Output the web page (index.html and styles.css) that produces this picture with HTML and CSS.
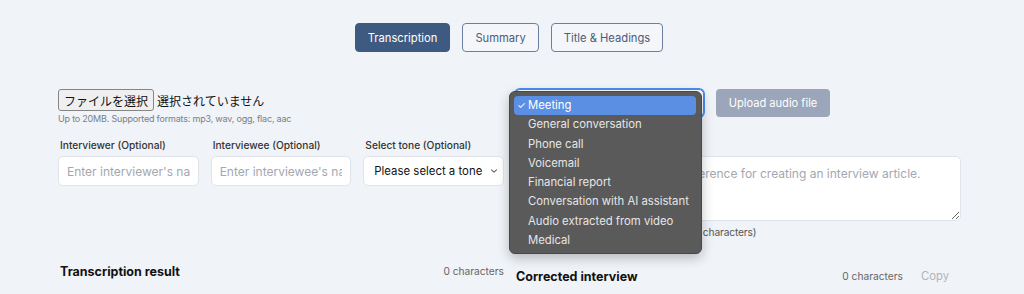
FILE: index.html
```html
<!DOCTYPE html>
<html lang="ja">
<head>
    <meta charset="UTF-8" />
    <meta name="viewport" content="width=device-width, initial-scale=1.0" />
    <title>Interview Transcription</title>
    <link rel="stylesheet" href="styles.css">
</head>
<body>
    <div class="page">
        <!-- Mode tabs -->
        <div class="tabs">
            <button class="tab active">Transcription</button>
            <button class="tab">Summary</button>
            <button class="tab">Title &amp; Headings</button>
        </div>

        <div class="columns">
            <!-- Left column -->
            <div class="col">
                <div class="file-row">
                    <span class="file-btn">ファイルを選択</span>
                    <span class="file-name">選択されていません</span>
                </div>
                <div class="hint">Up to 20MB. Supported formats: mp3, wav, ogg, flac, aac</div>

                <div class="fields">
                    <div class="field">
                        <label for="interviewer">Interviewer (Optional)</label>
                        <input type="text" id="interviewer" placeholder="Enter interviewer's name">
                    </div>
                    <div class="field">
                        <label for="interviewee">Interviewee (Optional)</label>
                        <input type="text" id="interviewee" placeholder="Enter interviewee's name">
                    </div>
                    <div class="field">
                        <label>Select tone (Optional)</label>
                        <div class="fake-select">
                            <span>Please select a tone</span>
                            <svg width="8" height="6" viewBox="0 0 8 6"><path d="M1.5 1.8 L4 4.2 L6.5 1.8" fill="none" stroke="#666" stroke-width="1.1" stroke-linecap="round" stroke-linejoin="round"/></svg>
                        </div>
                    </div>
                </div>

                <div class="result-head">
                    <h2>Transcription result</h2>
                    <span class="count">0 characters</span>
                </div>
            </div>

            <!-- Right column -->
            <div class="col">
                <div class="upload-row">
                    <div class="type-select">
                        <span>Meeting</span>
                        <!-- open native list -->
                        <div class="popup">
                            <div class="option selected"><span class="check">✓</span>Meeting</div>
                            <div class="option">General conversation</div>
                            <div class="option">Phone call</div>
                            <div class="option">Voicemail</div>
                            <div class="option">Financial report</div>
                            <div class="option">Conversation with AI assistant</div>
                            <div class="option">Audio extracted from video</div>
                            <div class="option">Medical</div>
                        </div>
                    </div>
                    <button class="upload-btn" disabled>Upload audio file</button>
                </div>

                <label class="ref-label" for="reference">Reference text (Optional)</label>
                <textarea id="reference" placeholder="Enter some text to use as a reference for creating an interview article."></textarea>
                <div class="note">Maximum 3,000 characters (currently 0 characters)</div>

                <div class="result-head right">
                    <h2>Corrected interview</h2>
                    <div class="head-tools">
                        <span class="count">0 characters</span>
                        <button class="copy-btn" disabled>Copy</button>
                    </div>
                </div>
            </div>
        </div>
    </div>
</body>
</html>
```

FILE: styles.css
```css
body {
    font-family: Inter, "Noto Sans CJK JP", sans-serif;
    margin: 0;
    padding: 0;
    background-color: #f0f3f8;
    color: #111;
    overflow: hidden;
}
.page {
    width: 902px;
    margin-left: 58px;
}
.tabs {
    display: flex;
    justify-content: center;
    gap: 12px;
    padding-top: 23px;
}
.tab {
    font-family: inherit;
    font-size: 11.2px;
    height: 29px;
    padding: 0 12px;
    border: 1px solid #6b7fa0;
    border-radius: 4px;
    background: #f4f6fa;
    color: #4a5c7e;
}
.tab.active {
    background: #3f5a80;
    border-color: #3f5a80;
    color: #fff;
}
.columns {
    display: grid;
    grid-template-columns: 446px 446px;
    gap: 11px;
    margin-top: 37px;
}
.col {
    display: flex;
    flex-direction: column;
}
.file-row {
    display: flex;
    align-items: center;
    height: 22px;
    font-family: "Noto Sans CJK JP", sans-serif;
    font-size: 12px;
}
.file-btn {
    display: flex;
    align-items: center;
    height: 20px;
    padding: 0 5px;
    background: #efefef;
    border: 1px solid #858585;
    border-radius: 3px;
    margin-right: 3px;
}
.hint {
    margin-top: 1px;
    font-size: 9px;
    letter-spacing: -0.2px;
    line-height: 14px;
    color: #7b7f86;
}
.fields {
    display: grid;
    grid-template-columns: repeat(3, 1fr);
    gap: 12px;
    margin-top: 12px;
}
.field {
    display: flex;
    flex-direction: column;
    gap: 4px;
}
.field label, .ref-label {
    font-size: 10.2px;
    line-height: 14px;
    font-weight: 500;
    color: #333;
    padding-left: 2px;
}
.field input, .fake-select {
    height: 30px;
    box-sizing: border-box;
    border: 1px solid #e0e4ea;
    border-radius: 5px;
    background: #fff;
    font-family: inherit;
    font-size: 12px;
    padding: 0 8px;
    width: 100%;
}
.field input::placeholder {
    color: #a3a8b0;
}
.fake-select {
    display: flex;
    align-items: center;
    justify-content: space-between;
    white-space: nowrap;
    color: #111;
    font-size: 11.4px;
    padding-left: 10px;
    padding-right: 5px;
}
.result-head {
    display: flex;
    justify-content: space-between;
    align-items: center;
    margin-top: 75px;
    height: 20px;
    padding-left: 2px;
}
.result-head h2 {
    margin: 0;
    font-size: 12.5px;
    font-weight: 700;
}
.count {
    font-size: 10.2px;
    color: #666;
}
.upload-row {
    display: flex;
    gap: 12px;
    height: 28px;
}
.type-select {
    position: relative;
    width: 189px;
    box-sizing: border-box;
    border: 1px solid #4b8cf2;
    box-shadow: 0 0 0 1px #4b8cf2;
    border-radius: 5px;
    background: #fff;
    font-size: 12px;
    display: flex;
    align-items: center;
    padding-left: 10px;
}
.upload-btn {
    width: 114px;
    font-family: inherit;
    font-size: 11.1px;
    border: none;
    border-radius: 4px;
    background: #9ba6ba;
    color: #fff;
}
.popup {
    position: absolute;
    left: -7px;
    top: 1px;
    width: 193px;
    box-sizing: border-box;
    padding: 4px 5px 3px 4px;
    background: #5a5a5a;
    border: 1px solid #484848;
    border-radius: 6px;
    box-shadow: 0 4px 12px rgba(0, 0, 0, 0.25);
    z-index: 10;
}
.option {
    height: 19.3px;
    line-height: 19.3px;
    padding-left: 14px;
    font-size: 11.3px;
    color: #e6e6e6;
    white-space: nowrap;
    position: relative;
}
.option.selected {
    background: #5b8fe3;
    border-radius: 4px;
    color: #fff;
}
.check {
    position: absolute;
    left: 3px;
    font-size: 10px;
}
.ref-label {
    margin-top: 21px;
}
textarea {
    margin-top: 4px;
    height: 65px;
    box-sizing: border-box;
    border: 1px solid #e0e4ea;
    border-radius: 5px;
    background: #fff;
    font-family: inherit;
    font-size: 12px;
    padding: 9px 10px;
    resize: vertical;
}
textarea::placeholder {
    color: #a3a8b0;
}
.note {
    margin-top: 4px;
    font-size: 10.2px;
    letter-spacing: -0.15px;
    line-height: 14px;
    color: #555;
}
.result-head.right {
    margin-top: 25px;
    height: 24px;
    padding-left: 1px;
}
.head-tools {
    display: flex;
    align-items: center;
    gap: 6px;
}
.copy-btn {
    font-family: inherit;
    font-size: 11.3px;
    border: none;
    background: none;
    color: #b3b3b3;
    padding: 0 12px;
}
```
